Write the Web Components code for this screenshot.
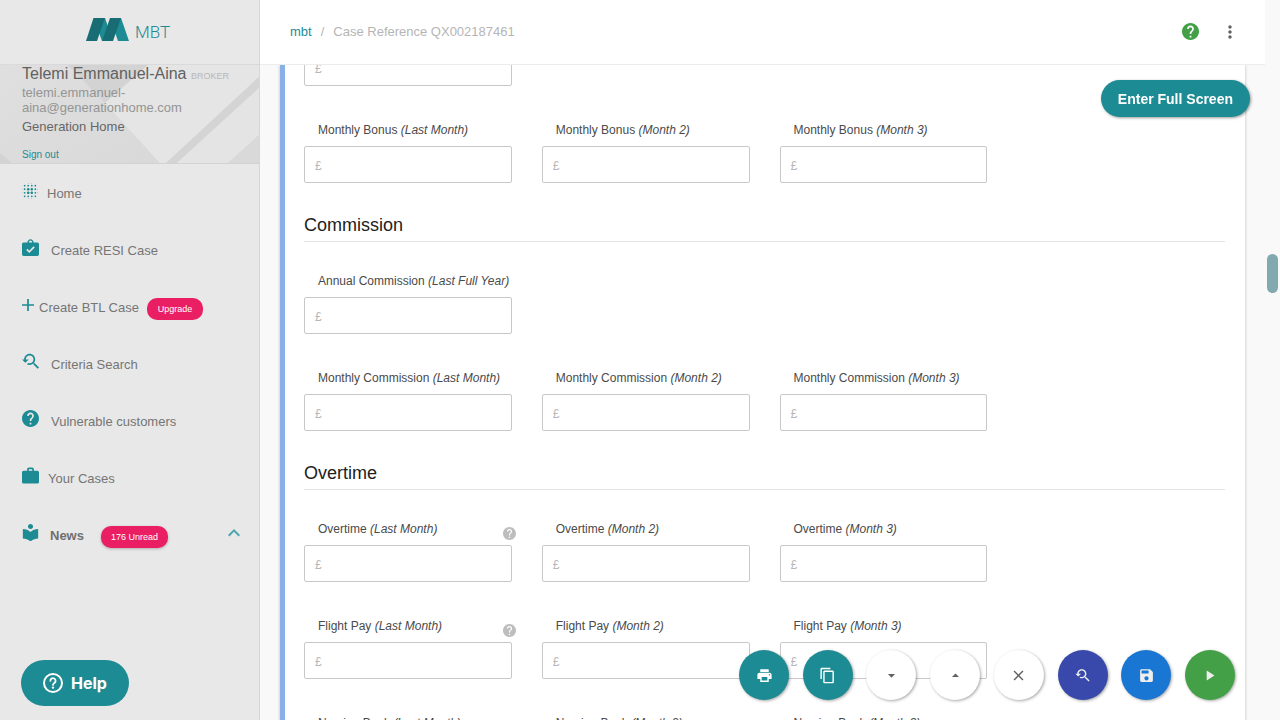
<!DOCTYPE html>
<html lang="en">
<head>
<meta charset="utf-8">
<title>MBT - Case</title>
<style>
  html, body { margin: 0; height: 100%; }
  body { font-family: "Liberation Sans", Arial, sans-serif; font-size: 13px; color: #3c4043; overflow: hidden; }
</style>
</head>
<body>
<mbt-app></mbt-app>
<script>
const RESEARCH = '<path d="M17.010 14h-.8l-.27-.27c.98-1.140 1.570-2.610 1.570-4.230 0-3.590-2.910-6.500-6.500-6.500s-6.500 3-6.500 6.500H2l3.840 4 4.160-4H6.510C6.510 7 8.530 5 11.010 5s4.500 2.010 4.500 4.500c0 2.480-2.020 4.500-4.500 4.500-.65 0-1.260-.14-1.820-.38L7.710 15.100c.97.570 2.090.9 3.300.9 1.610 0 3.080-.59 4.220-1.570l.27.27v.79l5.010 4.990L22 18.990l-4.990-4.990z"/>';
const ICONS = {
  blur: ['3 3 18 18', '<path d="M6 13c-.55 0-1 .45-1 1s.45 1 1 1 1-.45 1-1-.45-1-1-1zm0 4c-.55 0-1 .45-1 1s.45 1 1 1 1-.45 1-1-.45-1-1-1zm0-8c-.55 0-1 .45-1 1s.45 1 1 1 1-.45 1-1-.45-1-1-1zm-3 .5c-.28 0-.5.22-.5.5s.22.5.5.5.5-.22.5-.5-.22-.5-.5-.5zM6 5c-.55 0-1 .45-1 1s.45 1 1 1 1-.45 1-1-.45-1-1-1zm15 5.5c.28 0 .5-.22.5-.5s-.22-.5-.5-.5-.5.22-.5.5.22.5.5.5zM14 7c.55 0 1-.45 1-1s-.45-1-1-1-1 .45-1 1 .45 1 1 1zm0-3.500c.28 0 .5-.22.5-.5s-.22-.5-.5-.5-.5.22-.5.5.22.5.5.5zm-11 10c-.28 0-.5.22-.5.5s.22.5.5.5.5-.22.5-.5-.22-.5-.5-.5zm7 7c-.28 0-.5.22-.5.5s.22.5.5.5.5-.22.5-.5-.22-.5-.5-.5zm0-17c.28 0 .5-.22.5-.5s-.22-.5-.5-.5-.5.22-.5.5.22.5.5.5zM10 7c.55 0 1-.45 1-1s-.45-1-1-1-1 .45-1 1 .45 1 1 1zm0 5.500c-.83 0-1.500.67-1.500 1.500s.67 1.500 1.500 1.500 1.500-.67 1.500-1.500-.67-1.500-1.500-1.500zm8 .5c-.55 0-1 .45-1 1s.45 1 1 1 1-.45 1-1-.45-1-1-1zm0 4c-.55 0-1 .45-1 1s.45 1 1 1 1-.45 1-1-.45-1-1-1zm0-8c-.55 0-1 .45-1 1s.45 1 1 1 1-.45 1-1-.45-1-1-1zm0-4c-.55 0-1 .45-1 1s.45 1 1 1 1-.45 1-1-.45-1-1-1zm3 8.500c-.28 0-.5.22-.5.5s.22.5.5.5.5-.22.5-.5-.22-.5-.5-.5zM14 17c-.55 0-1 .45-1 1s.45 1 1 1 1-.45 1-1-.45-1-1-1zm0 3.500c-.28 0-.5.22-.5.5s.22.5.5.5.5-.22.5-.5-.22-.5-.5-.5zm-4-12c-.83 0-1.500.67-1.500 1.500s.67 1.500 1.500 1.500 1.500-.67 1.500-1.500-.67-1.500-1.500-1.500zm0 8.500c-.55 0-1 .45-1 1s.45 1 1 1 1-.45 1-1-.45-1-1-1zm4-4.500c-.83 0-1.500.67-1.500 1.500s.67 1.500 1.500 1.500 1.500-.67 1.500-1.500-.67-1.500-1.500-1.500zm0-4c-.83 0-1.500.67-1.500 1.500s.67 1.500 1.500 1.500 1.500-.67 1.500-1.500-.67-1.500-1.500-1.500z"/>'],
  caseCheck: ['2 1 20 20', '<path fill-rule="evenodd" d="M20 5h-4.200C15.400 2.800 14 1.200 12 1.200S8.600 2.800 8.200 5H4c-1.100 0-2 .9-2 2v12c0 1.100.9 2 2 2h16c1.100 0 2-.9 2-2V7c0-1.100-.9-2-2-2zm-8-2.200c1 0 1.800.9 2 2.200h-4c.2-1.300 1-2.200 2-2.200zM10.500 17.500L7 14l1.400-1.400 2.100 2.100 5.100-5.100L17 11z"/>'],
  plus: ['5 5 14 14', '<path d="M19 13h-6v6h-2v-6H5v-2h6V5h2v6h6v2z"/>'],
  research: ['2 3 20 18', RESEARCH],
  researchWide: ['0 0 24 24', RESEARCH],
  help: ['2 2 20 20', '<path d="M12 2C6.480 2 2 6.480 2 12s4.480 10 10 10 10-4.480 10-10S17.520 2 12 2zm1 17h-2v-2h2v2zm2.070-7.750l-.9.92C13.450 12.900 13 13.500 13 15h-2v-.5c0-1.100.45-2.100 1.170-2.830l1.240-1.260c.37-.36.59-.86.59-1.410 0-1.100-.9-2-2-2s-2 .9-2 2H8c0-2.210 1.790-4 4-4s4 1.790 4 4c0 .88-.36 1.680-.93 2.250z"/>'],
  work: ['2 2 20 19', '<path d="M20 6h-4V4c0-1.110-.89-2-2-2h-4c-1.110 0-2 .89-2 2v2H4c-1.110 0-1.990.89-1.990 2L2 19c0 1.110.89 2 2 2h16c1.110 0 2-.89 2-2V8c0-1.110-.89-2-2-2zm-6 0h-4V4h4v2z"/>'],
  library: ['3 2 18 20', '<path d="M12 11.550C9.640 9.350 6.480 8 3 8v11c3.480 0 6.640 1.350 9 3.550 2.360-2.190 5.520-3.550 9-3.550V8c-3.480 0-6.640 1.350-9 3.550zM12 8c1.660 0 3-1.340 3-3s-1.340-3-3-3-3 1.340-3 3 1.340 3 3 3z"/>'],
  chevron: ['6 8 12 8', '<path d="M12 8l-6 6 1.410 1.410L12 10.830l4.590 4.580L18 14z"/>'],
  dots: ['0 0 24 24', '<path d="M12 8c1.100 0 2-.9 2-2s-.9-2-2-2-2 .9-2 2 .9 2 2 2zm0 2c-1.100 0-2 .9-2 2s.9 2 2 2 2-.9 2-2-.9-2-2-2zm0 6c-1.100 0-2 .9-2 2s.9 2 2 2 2-.9 2-2-.9-2-2-2z"/>'],
  print: ['0 0 24 24', '<path d="M19 8H5c-1.660 0-3 1.340-3 3v6h4v4h12v-4h4v-6c0-1.660-1.340-3-3-3zm-3 11H8v-5h8v5zm3-7c-.55 0-1-.45-1-1s.45-1 1-1 1 .45 1 1-.45 1-1 1zm-1-9H6v4h12V3z"/>'],
  copy: ['0 0 24 24', '<path d="M16 1H4c-1.100 0-2 .9-2 2v14h2V3h12V1zm3 4H8c-1.100 0-2 .9-2 2v14c0 1.100.9 2 2 2h11c1.100 0 2-.9 2-2V7c0-1.100-.9-2-2-2zm0 16H8V7h11v14z"/>'],
  down: ['0 0 24 24', '<path d="M7 10l5 5 5-5z"/>'],
  up: ['0 0 24 24', '<path d="M7 14l5-5 5 5z"/>'],
  close: ['0 0 24 24', '<path d="M19 6.410L17.590 5 12 10.590 6.410 5 5 6.410 10.590 12 5 17.590 6.410 19 12 13.410 17.590 19 19 17.590 13.410 12z"/>'],
  save: ['0 0 24 24', '<path d="M17 3H5c-1.110 0-2 .9-2 2v14c0 1.100.89 2 2 2h14c1.100 0 2-.9 2-2V7l-4-4zm-5 16c-1.660 0-3-1.340-3-3s1.340-3 3-3 3 1.340 3 3-1.340 3-3 3zm3-10H5V5h10v4z"/>'],
  play: ['0 0 24 24', '<path d="M8 5v14l11-7z"/>'],
  helpRing: ['0 0 20 20', '<circle cx="10" cy="10" r="9" fill="none" stroke="currentColor" stroke-width="2"/><path d="M7.400 7.900a2.600 2.600 0 1 1 4 2.100c-.9.600-1.400 1-1.400 1.900" fill="none" stroke="currentColor" stroke-width="1.800" stroke-linecap="round"/><circle cx="10" cy="14.600" r="1.200"/>']
};

function define(name, html, setup) {
  const template = document.createElement('template');
  template.innerHTML = html;
  customElements.define(name, class extends HTMLElement {
    connectedCallback() {
      if (this.shadowRoot) return;
      const root = this.attachShadow({ mode: 'open' });
      root.append(template.content.cloneNode(true));
      if (setup) setup(this, root);
    }
  });
}

function makeIcon(name, className) {
  const icon = document.createElement('mbt-icon');
  icon.setAttribute('name', name);
  if (className) icon.className = className;
  return icon;
}

define('mbt-icon', `
  <style>:host { display: block; flex: none; } svg { display: block; width: 100%; height: 100%; fill: currentColor; }</style>
  <svg aria-hidden="true"></svg>`, (el, root) => {
  const [box, shape] = ICONS[el.getAttribute('name')];
  const svg = root.querySelector('svg');
  svg.setAttribute('viewBox', box);
  svg.innerHTML = shape;
});

define('mbt-badge', `
  <style>
    :host { display: block; box-sizing: border-box; height: 22px; min-width: 56px; line-height: 22px; margin-top: 3px; padding: 0 10px;
      border-radius: 10px; background: #e91e63; color: #fff; font-size: 9px; font-weight: 400; text-align: center; }
    :host([raised]) { box-shadow: 0 1px 3px rgba(0,0,0,.25); }
  </style><slot></slot>`);

define('mbt-nav-item', `
  <style>
    :host { display: block; }
    a { display: flex; align-items: center; height: 57px; padding: 0 19px 0 22px; color: #757575; text-decoration: none; white-space: nowrap; }
    .lead { width: var(--icon, 17px); height: var(--icon, 17px); margin: 0 var(--gap, 12px) 6px 0; color: #1d8b93; }
    ::slotted(mbt-badge) { margin-left: var(--badge-gap, 8px); }
    .chev { width: 12px; height: 8px; margin: 0 0 6px auto; color: #4aa5ad; }
    :host([strong]) a { font-weight: 700; color: #6f6f6f; }
  </style>
  <a href="#"><slot></slot></a>`, (el, root) => {
  const link = root.querySelector('a');
  link.prepend(makeIcon(el.getAttribute('icon'), 'lead'));
  if (el.hasAttribute('open')) link.append(makeIcon('chevron', 'chev'));
});

define('mbt-user', `
  <style>
    :host { display: block; position: relative; box-sizing: border-box; height: 99px; padding: 0 22px; border-bottom: 1px solid #d3d3d3; background: #dcdcdc; }
    .art { position: absolute; inset: 0; width: 100%; height: 100%; }
    .info { position: relative; }
    p { margin: 0; }
    .name { font-size: 16px; line-height: 18px; color: #616161; white-space: nowrap; }
    .name small { font-size: 9px; color: #b8b8b8; }
    .mail { line-height: 15px; color: #949494; }
    .firm { margin: 3px 0 12px; line-height: 18px; color: #666; }
    a { display: block; font-size: 10px; line-height: 14px; color: #1d8b93; text-decoration: none; }
  </style>
  <svg class="art" viewBox="0 0 259 98" preserveAspectRatio="none" aria-hidden="true">
    <defs><linearGradient id="shade" x1="0" y1="0" x2="1" y2="1"><stop offset="0" stop-color="#dfdfdf"/><stop offset="1" stop-color="#d9d9d9"/></linearGradient></defs>
    <path d="M0 0H68L105 38L160 98H0Z" fill="url(#shade)"/>
    <path d="M68 0H148L105 38Z" fill="#d3d3d3"/>
    <path d="M148 0H259V12L166 98H160L105 38Z" fill="#e5e5e5"/>
    <path d="M259 12V23L177 98H166Z" fill="#d4d4d4"/>
    <path d="M259 23V70L228 98H177Z" fill="#e4e4e4"/>
    <path d="M259 70V98H228Z" fill="#d9d9d9"/>
    <path d="M0 88L12 98H0Z" fill="#d3d3d3"/>
  </svg>
  <div class="info">
    <p class="name">Telemi Emmanuel-Aina <small>BROKER</small></p>
    <p class="mail">telemi.emmanuel-aina@generationhome.com</p>
    <p class="firm">Generation Home</p>
    <a href="#">Sign out</a>
  </div>`);

define('mbt-sidebar', `
  <style>
    :host { display: block; box-sizing: border-box; width: 260px; flex: none; background: #e8e8e8; border-right: 1px solid #d6d6d6; }
    .brand { box-sizing: border-box; height: 65px; display: flex; align-items: center; justify-content: center; gap: 6px; padding: 0 3px 5px 0;
      border-bottom: 1px solid #dadada; color: #1d8b93; text-decoration: none; font: 300 17px/24px Roboto, "Liberation Sans", sans-serif; }
    .brand span { padding-top: 4px; }
    nav { padding-top: 1px; }
    .home { --icon: 16px; --gap: 9px; }
    .btl { --icon: 12px; --gap: 5px; }
    .cases { --gap: 9px; }
    .news { --badge-gap: 17px; --gap: 11px; }
  </style>
  <a class="brand" href="#">
    <svg width="43" height="23" viewBox="0 0 43 23" aria-hidden="true">
      <path d="M7.500 0H19L27 23H16Z" fill="#1d8b93"/><path d="M24 0H35L43 23H32Z" fill="#1d8b93"/>
      <path d="M7.500 0H19L11 23H0Z" fill="#176d73"/><path d="M24 0H35L27 23H16Z" fill="#176d73"/>
    </svg><span>MBT</span>
  </a>
  <mbt-user></mbt-user>
  <nav>
    <mbt-nav-item class="home" icon="blur">Home</mbt-nav-item>
    <mbt-nav-item icon="caseCheck">Create RESI Case</mbt-nav-item>
    <mbt-nav-item class="btl" icon="plus">Create BTL Case<mbt-badge>Upgrade</mbt-badge></mbt-nav-item>
    <mbt-nav-item icon="research">Criteria Search</mbt-nav-item>
    <mbt-nav-item icon="help">Vulnerable customers</mbt-nav-item>
    <mbt-nav-item class="cases" icon="work">Your Cases</mbt-nav-item>
    <mbt-nav-item class="news" icon="library" strong open>News<mbt-badge raised>176 Unread</mbt-badge></mbt-nav-item>
  </nav>`);

define('mbt-header', `
  <style>
    :host { display: flex; align-items: center; justify-content: space-between; box-sizing: border-box; height: 65px; flex: none;
      padding: 0 25px 1px 30px; background: #fff; border-bottom: 1px solid #ececec; }
    .crumbs { display: flex; gap: 9px; color: #b5b5b5; line-height: 16px; }
    a { color: #1d8b93; text-decoration: none; }
    .tools { display: flex; align-items: center; gap: 20px; }
    button { border: 0; padding: 0; background: none; width: 20px; height: 20px; display: grid; place-items: center; color: #616161; }
    .help { color: #43a047; }
    .help mbt-icon { width: 17px; height: 17px; }
    .more mbt-icon { width: 20px; height: 20px; }
  </style>
  <div class="crumbs"><a href="#">mbt</a><span>/</span><span>Case Reference QX002187461</span></div>
  <div class="tools">
    <button class="help" aria-label="Help"><mbt-icon name="help"></mbt-icon></button>
    <button class="more" aria-label="More"><mbt-icon name="dots"></mbt-icon></button>
  </div>`);

define('money-field', `
  <style>
    :host { display: block; min-width: 0; }
    .head { display: flex; justify-content: space-between; height: 24px; }
    label { padding-left: 14px; font-size: 12px; line-height: 16px; color: #4a4a4a; white-space: nowrap; }
    mbt-icon { width: 13px; height: 13px; align-self: center; margin-right: -4px; color: #bdbdbd; }
    input { display: block; box-sizing: border-box; width: 100%; height: 37px; padding: 3px 10px 0; border: 1px solid #c8c8c8; border-radius: 2px;
      background: #fff; font: 12px "Liberation Sans", Arial, sans-serif; color: #444; outline: 0; }
    input::placeholder { color: #b8b8b8; opacity: 1; }
  </style>
  <div class="head"><label for="amount"><slot></slot></label></div>
  <input id="amount" type="text" placeholder="£">`, (el, root) => {
  const head = root.querySelector('.head');
  if (el.hasAttribute('bare')) {
    head.remove();
    root.querySelector('input').setAttribute('aria-label', el.getAttribute('bare'));
  }
  if (el.hasAttribute('help')) head.append(makeIcon('help'));
});

define('field-row', `
  <style>:host { display: grid; grid-template-columns: repeat(4, minmax(0, 1fr)); column-gap: 30px; margin-bottom: 36px; }</style>
  <slot></slot>`);

define('form-section', `
  <style>
    :host { display: block; margin-top: -6px; }
    h2 { margin: 0 0 31px; padding-bottom: 4px; border-bottom: 1px solid #e2e2e2; font-size: 18px; font-weight: 400; line-height: 24px; color: #212121; }
  </style>
  <h2></h2><slot></slot>`, (el, root) => { root.querySelector('h2').textContent = el.getAttribute('heading'); });

define('case-form', `
  <style>
    :host { display: block; flex: 1; min-height: 0; overflow: hidden; padding: 0 20px; background: #f9f9f9; }
    form { box-sizing: border-box; padding: 0 20px 0 19px; border-left: 5px solid #8ab0e8; background: #fff; box-shadow: 0 0 3px rgba(0,0,0,.25); }
    .bonus { display: flow-root; }
    .first { margin-top: -16px; }
  </style>
  <form>
    <div class="bonus">
      <field-row class="first"><money-field bare="Annual Bonus (Last Full Year)"></money-field></field-row>
      <field-row>
        <money-field>Monthly Bonus <i>(Last Month)</i></money-field>
        <money-field>Monthly Bonus <i>(Month 2)</i></money-field>
        <money-field>Monthly Bonus <i>(Month 3)</i></money-field>
      </field-row>
    </div>
    <form-section heading="Commission">
      <field-row><money-field>Annual Commission <i>(Last Full Year)</i></money-field></field-row>
      <field-row>
        <money-field>Monthly Commission <i>(Last Month)</i></money-field>
        <money-field>Monthly Commission <i>(Month 2)</i></money-field>
        <money-field>Monthly Commission <i>(Month 3)</i></money-field>
      </field-row>
    </form-section>
    <form-section heading="Overtime">
      <field-row>
        <money-field help>Overtime <i>(Last Month)</i></money-field>
        <money-field>Overtime <i>(Month 2)</i></money-field>
        <money-field>Overtime <i>(Month 3)</i></money-field>
      </field-row>
      <field-row>
        <money-field help>Flight Pay <i>(Last Month)</i></money-field>
        <money-field>Flight Pay <i>(Month 2)</i></money-field>
        <money-field>Flight Pay <i>(Month 3)</i></money-field>
      </field-row>
      <field-row>
        <money-field>Nursing Bank <i>(Last Month)</i></money-field>
        <money-field>Nursing Bank <i>(Month 2)</i></money-field>
        <money-field>Nursing Bank <i>(Month 3)</i></money-field>
      </field-row>
    </form-section>
  </form>`);

define('fab-button', `
  <style>
    :host { display: block; }
    button { display: grid; place-items: center; width: 50px; height: 50px; padding: 0; border: 0; border-radius: 50%;
      background: var(--bg, #fff); color: var(--fg, #616161); box-shadow: 1px 1px 3px rgba(0,0,0,.35); }
    mbt-icon { width: 17px; height: 17px; }
  </style>
  <button></button>`, (el, root) => {
  const button = root.querySelector('button');
  button.setAttribute('aria-label', el.getAttribute('label'));
  button.append(makeIcon(el.getAttribute('icon')));
});

define('fab-bar', `
  <style>
    :host { position: fixed; right: 45px; bottom: 20px; width: 496px; display: flex; justify-content: space-between; }
    .teal { --bg: #1d8b93; --fg: #fff; } .indigo { --bg: #3949ab; --fg: #eee; } .blue { --bg: #1976d2; --fg: #eee; } .green { --bg: #43a047; --fg: #eee; }
  </style>
  <fab-button class="teal" icon="print" label="Print"></fab-button>
  <fab-button class="teal" icon="copy" label="Copy"></fab-button>
  <fab-button icon="down" label="Next section"></fab-button>
  <fab-button icon="up" label="Previous section"></fab-button>
  <fab-button icon="close" label="Close"></fab-button>
  <fab-button class="indigo" icon="researchWide" label="Search"></fab-button>
  <fab-button class="blue" icon="save" label="Save"></fab-button>
  <fab-button class="green" icon="play" label="Run"></fab-button>`);

define('full-screen-button', `
  <style>
    :host { position: fixed; top: 80px; right: 30px; }
    button { height: 37px; padding: 0 17px; border: 0; border-radius: 19px; background: #1d8b93; color: #fff;
      font: 700 14px "Liberation Sans", Arial, sans-serif; box-shadow: 1px 1px 3px rgba(0,0,0,.4); }
  </style><button>Enter Full Screen</button>`);

define('help-button', `
  <style>
    :host { position: fixed; left: 21px; bottom: 14px; }
    button { display: flex; align-items: center; gap: 8px; height: 46px; padding: 0 22px; border: 0; border-radius: 23px;
      background: #1d8b93; color: #fff; font: 700 16px Inter, "Liberation Sans", sans-serif; }
    mbt-icon { width: 20px; height: 20px; }
  </style><button><mbt-icon name="helpRing"></mbt-icon>Help</button>`);

define('scroll-rail', `
  <style>
    :host { display: block; box-sizing: border-box; flex: none; width: 15px; padding: 254px 2px 0; background: #f9f9f9; }
    div { height: 39px; border-radius: 6px; background: #82a9b0; }
  </style><div></div>`);

define('mbt-app', `
  <style>
    :host { display: flex; height: 100vh; overflow: hidden; }
    main { flex: 1; min-width: 0; display: flex; flex-direction: column; }
  </style>
  <mbt-sidebar></mbt-sidebar>
  <main><mbt-header></mbt-header><case-form></case-form></main>
  <scroll-rail></scroll-rail>
  <full-screen-button></full-screen-button>
  <fab-bar></fab-bar>
  <help-button></help-button>`);
</script>
</body>
</html>
